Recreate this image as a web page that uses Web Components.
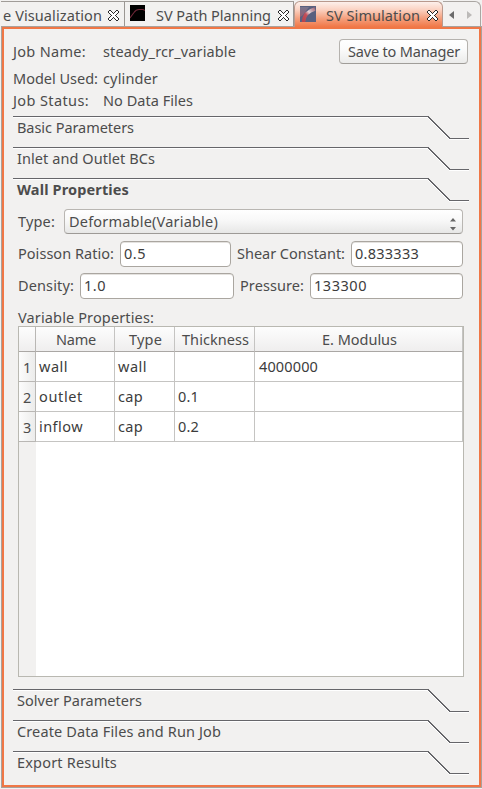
<!DOCTYPE html>
<html lang="en"><head><meta charset="utf-8"><title>SV Simulation</title>
<style>
html,body{margin:0;background:#f2f1f0}
body{width:482px;height:789px;overflow:hidden;font:14.5px/20px "Noto Sans","Open Sans",sans-serif;color:#4c4c4c}
</style></head><body>
<sv-app></sv-app>
<script>
const define=(name,html,setup)=>customElements.define(name,class extends HTMLElement{
  connectedCallback(){
    if(!this.shadowRoot){
      const t=document.createElement('template');t.innerHTML=html;
      this.attachShadow({mode:'open'}).append(t.content.cloneNode(true));
    }
    if(setup)setup.call(this,this.shadowRoot);
  }
});

// A single-line label whose tracking is adjusted to fill the width given by "w".
define('fit-text',`<style>:host{display:block;flex:none;height:20px;line-height:20px;white-space:pre}span{display:inline-block}</style><span><slot></slot></span>`,
function(r){
  const w=+this.getAttribute('w'),s=r.querySelector('span');
  this.style.width=w+'px';
  s.style.letterSpacing=((w+1-s.getBoundingClientRect().width)/this.textContent.length)+'px';
});

define('close-icon',`<style>:host{display:block;flex:none;width:11px;height:11px}svg{display:block}</style>
<svg width="11" height="11" shape-rendering="crispEdges"><path d="M1 1h2v1h1v1h1v1h1v-1h1v-1h1v-1h2v2h-1v1h-1v1h-1v1h1v1h1v1h1v2h-2v-1h-1v-1h-1v-1h-1v1h-1v1h-1v1h-2v-2h1v-1h1v-1h1v-1h-1v-1h-1v-1h-1z" fill="#fff"/><path fill="#2a2a2a" d="M1 0h2v1H1zM8 0h2v1H8zM0 1h1v2H0zM3 1h1v1H3zM7 1h1v1H7zM10 1h1v2h-1zM4 2h1v1H4zM6 2h1v1H6zM1 3h1v1H1zM5 3h1v1H5zM9 3h1v1H9zM2 4h1v1H2zM8 4h1v1H8zM3 5h1v1H3zM7 5h1v1H7zM2 6h1v1H2zM8 6h1v1H8zM1 7h1v1H1zM5 7h1v1H5zM9 7h1v1H9zM0 8h1v2H0zM4 8h1v1H4zM6 8h1v1H6zM10 8h1v2h-1zM3 9h1v1H3zM7 9h1v1H7zM1 10h2v1H1zM8 10h2v1H8z"/></svg>`);

define('path-icon',`<style>:host{display:block;flex:none;width:15px;height:16px}svg{display:block}</style>
<svg width="15" height="16"><path fill="#000" d="M0 0h15v16H0z"/><path d="M0 13 4 7.500Q6 4.500 9 4.500h4l2 1" fill="none" stroke="#6d2737" stroke-width="1.100"/></svg>`);

define('simulation-icon',`<style>:host{display:block;flex:none;width:16px;height:16px}svg{display:block}</style>
<svg width="16" height="16"><defs><linearGradient id="v" x1="0" y1="1" x2="1" y2="0"><stop stop-color="#b8434c"/><stop offset=".4" stop-color="#c4505a"/><stop offset=".62" stop-color="#e2d3d8"/><stop offset="1" stop-color="#a9707f"/></linearGradient><linearGradient id="l" x2="0" y2="1"><stop stop-color="#8d8296"/><stop offset="1" stop-color="#b9606a"/></linearGradient></defs><path fill="#5a607f" d="M0 0h16v16H0z"/><path fill="url(#l)" d="M0 1h9L3 9 0 11z" opacity=".6"/><path d="M3.500 16Q4 6 15 3" fill="none" stroke="url(#v)" stroke-width="3.500"/></svg>`);

define('sv-tab',`<style>
:host{display:flex;box-sizing:border-box;height:25px;border-top:1px solid #a09c98;border-right:1px solid #9a9692;flex:none;background:#f2f1f0}
:host([active]){position:relative;z-index:1;height:26px;border:1px solid #b9998d;border-bottom:0;border-radius:6px 6px 0 0;background:linear-gradient(#fdf0eb 0,#fbd3c3 30%,#f5a17f 65%,#f07746 100%)}
</style><slot></slot>`);

define('tab-scroller',`<style>:host{display:block;box-sizing:border-box;flex:none;height:25px;border-top:1px solid #aaa6a2;border-right:1px solid #aaa6a2;border-radius:0 6px 0 0}svg{display:block}</style>
<svg width="37" height="23"><path d="m11 9v8l-5-4z" fill="#6b6b6b"/><path d="m24 9v8l5-4z" fill="#bcbab8"/></svg>`);

define('section-header',`<style>:host{display:grid;width:456px;height:24px;flex:none}svg,slot{grid-area:1/1}slot{display:block;padding:1px 0 0 4px}svg{display:block}:host([bold]){font-weight:700}</style>
<svg width="456" height="25" fill="none" shape-rendering="crispEdges"><path d="M0 1.500h415l22 22h19" stroke="#fff"/><path d="M0 .5h415l22 22h19" stroke="#66666a"/></svg><slot></slot>`);

define('push-button',`<style>:host{display:flex;box-sizing:border-box;width:129px;height:25px;padding:1px 0 0 8px;border:1px solid #b5b2ae;border-bottom-color:#a09d99;border-radius:4px;background:linear-gradient(#fff,#fbfbfb 40%,#ebebea)}</style><slot></slot>`);

define('combo-box',`<style>:host{display:flex;box-sizing:border-box;width:399px;height:25px;padding:1px 6px 0 4px;justify-content:space-between;border:1px solid #b9b6b2;border-bottom-color:#9d9a96;border-radius:4px;background:linear-gradient(#fff,#f8f8f8 45%,#e7e7e6)}svg{margin-top:7px}</style>
<slot></slot><svg width="6" height="13"><path d="M0 3.500 3 0l3 3.500zM0 9h6l-3 3.500z" fill="#666"/></svg>`);

define('text-field',`<style>:host{display:flex;box-sizing:border-box;flex:none;height:26px;padding:1px 0 0 3px;border:1px solid #aaa6a0;border-radius:4px;background:#fff;color:#3c3c3c;box-shadow:inset 0 1px 0 #e4e2df}</style><slot></slot>`);

define('form-row',`<style>:host{display:flex;width:445px;height:26px;justify-content:space-between}slot{display:contents}</style><slot></slot>`);

define('data-table',`<style>
:host{display:flex;flex-direction:column;box-sizing:border-box;width:446px;height:351px;border:1px solid #b9b8b1;background:linear-gradient(90deg,#f2f1f0 17px,#fff 17px)}
.row{display:grid;grid-template-columns:17px 79px 60px 80px 208px;height:30px;color:#3c3c3c}
.row>div{box-sizing:border-box;border-right:1px solid #c5c4c2;border-bottom:1px solid #c5c4c2;padding:4px 0 0 3px;display:flex}
.row>div:last-child{padding-left:4px}
.row>div:first-child{background:linear-gradient(90deg,#fcfcfc,#ececeb);padding:5px 0 0 4px;border-color:#b9b7b4;color:#4c4c4c}
.head{height:25px;color:#4c4c4c}
.row.head>div{background:linear-gradient(#fdfdfd,#efeeee);padding:2px 0 0 1px;justify-content:center;border-bottom-color:#aaa7a4}
</style>
<div class="row head"><div></div><div><fit-text w="39">Name</fit-text></div><div><fit-text w="32">Type</fit-text></div><div><fit-text w="66">Thickness</fit-text></div><div><fit-text w="74">E. Modulus</fit-text></div></div>
<div class="row"><div><fit-text w="7">1</fit-text></div><div><fit-text w="28">wall</fit-text></div><div><fit-text w="28">wall</fit-text></div><div></div><div><fit-text w="58">4000000</fit-text></div></div>
<div class="row"><div><fit-text w="7">2</fit-text></div><div><fit-text w="43">outlet</fit-text></div><div><fit-text w="24">cap</fit-text></div><div><fit-text w="20">0.1</fit-text></div><div></div></div>
<div class="row"><div><fit-text w="7">3</fit-text></div><div><fit-text w="43">inflow</fit-text></div><div><fit-text w="24">cap</fit-text></div><div><fit-text w="20">0.2</fit-text></div><div></div></div>`);

define('sv-app',`<style>
:host{display:block;width:482px;height:789px;background:#f2f1f0}
.tabs{display:flex;height:27px;padding:1px 0 0 1px;box-sizing:border-box}
.tabs fit-text{margin-top:3px}
.panel{box-sizing:border-box;width:479px;height:760px;margin-left:2px;border:2px solid #f07746;outline:1px solid #aaa19c;padding:0 0 0 9px;display:flex;flex-direction:column}
.info{display:grid;grid-template-columns:90px 236px auto;height:25px;padding-top:10px;align-items:start}
.info>fit-text{margin-top:2px}
.pair{display:grid;grid-template-columns:90px auto;height:22px}
.gap{height:7px;flex:none}
.form{padding:0 0 0 5px;display:flex;flex-direction:column}
.g{display:flex;justify-content:space-between}
.g>fit-text{margin-top:2px}
</style>
<div class="tabs">
 <sv-tab style="width:124px;padding-left:2px"><fit-text w="98">e Visualization</fit-text><close-icon style="margin:8px 0 0 7px"></close-icon></sv-tab>
 <sv-tab style="width:169px;padding-left:5px"><path-icon style="margin-top:3px"></path-icon><fit-text w="114" style="margin-left:11px">SV Path Planning</fit-text><close-icon style="margin:8px 0 0 8px"></close-icon></sv-tab>
 <sv-tab active style="width:149px;padding-left:5px"><simulation-icon style="margin-top:4px"></simulation-icon><fit-text w="93" style="margin-left:10px">SV Simulation</fit-text><close-icon style="margin:8px 0 0 8px"></close-icon></sv-tab>
 <tab-scroller style="width:38px"></tab-scroller>
</div>
<div class="panel">
 <div class="info"><fit-text w="72">Job Name:</fit-text><fit-text w="132">steady_rcr_variable</fit-text><push-button><fit-text w="111">Save to Manager</fit-text></push-button></div>
 <div class="pair" style="margin-top:4px"><fit-text w="84">Model Used:</fit-text><fit-text w="54">cylinder</fit-text></div>
 <div class="pair"><fit-text w="75">Job Status:</fit-text><fit-text w="89">No Data Files</fit-text></div>
 <div style="height:4px;flex:none"></div>
 <section-header><fit-text w="116">Basic Parameters</fit-text></section-header><div class="gap"></div>
 <section-header><fit-text w="137">Inlet and Outlet BCs</fit-text></section-header><div class="gap"></div>
 <section-header bold><fit-text w="111">Wall Properties</fit-text></section-header><div class="gap"></div>
 <div class="form">
  <form-row><fit-text w="36" style="margin-top:2px">Type:</fit-text><combo-box><fit-text w="148">Deformable(Variable)</fit-text></combo-box></form-row>
  <form-row style="margin-top:6px"><div class="g" style="width:213px"><fit-text w="95">Poisson Ratio:</fit-text><text-field style="width:111px"><fit-text w="21">0.5</fit-text></text-field></div><div class="g" style="width:226px"><fit-text w="107">Shear Constant:</fit-text><text-field style="width:112px"><fit-text w="63">0.833333</fit-text></text-field></div></form-row>
  <form-row style="margin-top:6px"><div class="g" style="width:216px"><fit-text w="55">Density:</fit-text><text-field style="width:154px"><fit-text w="21">1.0</fit-text></text-field></div><div class="g" style="width:223px"><fit-text w="63">Pressure:</fit-text><text-field style="width:153px"><fit-text w="52">133300</fit-text></text-field></div></form-row>
  <fit-text w="135" style="margin-top:8px;height:19px">Variable Properties:</fit-text>
  <data-table></data-table>
 </div>
 <div style="height:12px;flex:none"></div>
 <section-header><fit-text w="124">Solver Parameters</fit-text></section-header><div class="gap"></div>
 <section-header><fit-text w="203">Create Data Files and Run Job</fit-text></section-header><div class="gap"></div>
 <section-header><fit-text w="99">Export Results</fit-text></section-header>
</div>`);
</script></body></html>
